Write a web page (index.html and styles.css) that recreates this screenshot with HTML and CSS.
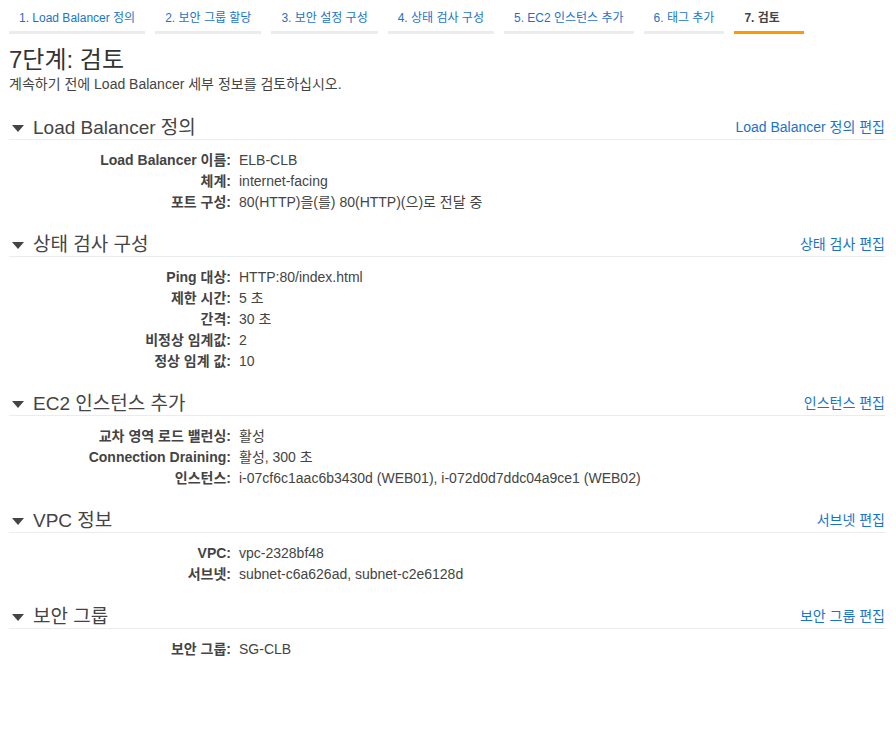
FILE: index.html
```html
<!DOCTYPE html>
<html lang="ko">
<head>
<meta charset="utf-8">
<title>7단계: 검토</title>
<link rel="stylesheet" href="styles.css">
</head>
<body>
<div class="page">
  <nav class="tabs">
    <a class="tab">1. Load Balancer 정의</a>
    <a class="tab">2. 보안 그룹 할당</a>
    <a class="tab">3. 보안 설정 구성</a>
    <a class="tab">4. 상태 검사 구성</a>
    <a class="tab">5. EC2 인스턴스 추가</a>
    <a class="tab">6. 태그 추가</a>
    <a class="tab active">7. 검토</a>
  </nav>

  <h1 class="title">7단계: 검토</h1>
  <p class="subtitle">계속하기 전에 Load Balancer 세부 정보를 검토하십시오.</p>

  <section class="section">
    <div class="section-head">
      <h2 class="section-title"><span class="caret"></span>Load Balancer 정의</h2>
      <a class="edit">Load Balancer 정의 편집</a>
    </div>
    <dl class="rows">
      <dt>Load Balancer 이름:</dt><dd>ELB-CLB</dd>
      <dt>체계:</dt><dd>internet-facing</dd>
      <dt>포트 구성:</dt><dd>80(HTTP)을(를) 80(HTTP)(으)로 전달 중</dd>
    </dl>
  </section>

  <section class="section">
    <div class="section-head">
      <h2 class="section-title"><span class="caret"></span>상태 검사 구성</h2>
      <a class="edit">상태 검사 편집</a>
    </div>
    <dl class="rows">
      <dt>Ping 대상:</dt><dd>HTTP:80/index.html</dd>
      <dt>제한 시간:</dt><dd>5 초</dd>
      <dt>간격:</dt><dd>30 초</dd>
      <dt>비정상 임계값:</dt><dd>2</dd>
      <dt>정상 임계 값:</dt><dd>10</dd>
    </dl>
  </section>

  <section class="section">
    <div class="section-head">
      <h2 class="section-title"><span class="caret"></span>EC2 인스턴스 추가</h2>
      <a class="edit">인스턴스 편집</a>
    </div>
    <dl class="rows">
      <dt>교차 영역 로드 밸런싱:</dt><dd>활성</dd>
      <dt>Connection Draining:</dt><dd>활성, 300 초</dd>
      <dt>인스턴스:</dt><dd>i-07cf6c1aac6b3430d (WEB01), i-072d0d7ddc04a9ce1 (WEB02)</dd>
    </dl>
  </section>

  <section class="section">
    <div class="section-head">
      <h2 class="section-title"><span class="caret"></span>VPC 정보</h2>
      <a class="edit">서브넷 편집</a>
    </div>
    <dl class="rows">
      <dt>VPC:</dt><dd>vpc-2328bf48</dd>
      <dt>서브넷:</dt><dd>subnet-c6a626ad, subnet-c2e6128d</dd>
    </dl>
  </section>

  <section class="section">
    <div class="section-head">
      <h2 class="section-title"><span class="caret"></span>보안 그룹</h2>
      <a class="edit">보안 그룹 편집</a>
    </div>
    <dl class="rows">
      <dt>보안 그룹:</dt><dd>SG-CLB</dd>
    </dl>
  </section>
</div>
</body>
</html>
```

FILE: styles.css
```css
html, body {
  margin: 0;
  padding: 0;
  background: #ffffff;
}

body {
  font-family: "Liberation Sans", "Noto Sans CJK KR", Arial, sans-serif;
  color: #444444;
  font-size: 14px;
}

.page {
  padding: 10px 11px 0 9px;
}

.tabs {
  display: flex;
  gap: 10px;
}

.tab {
  display: block;
  font-size: 12px;
  line-height: 14px;
  padding: 1px 10px 6px;
  color: #1a73c9;
  border-bottom: 3px solid #eaeded;
  cursor: pointer;
}

.tab.active {
  min-width: 50px;
  color: #444444;
  font-weight: bold;
  border-bottom-color: #ff9900;
}

.title {
  margin: 12px 0 0;
  font-size: 24px;
  line-height: 28px;
  font-weight: normal;
  color: #333333;
}

.subtitle {
  margin: 1px 0 24px;
  font-size: 14px;
  line-height: 18px;
}

.section {
  margin-bottom: 21px;
}

.section-head {
  display: flex;
  justify-content: space-between;
  align-items: baseline;
  height: 22px;
  border-bottom: 1px solid #eaeded;
}

.section-title {
  margin: 0;
  display: flex;
  align-items: center;
  font-size: 19px;
  line-height: 22px;
  font-weight: normal;
  color: #444444;
}

.caret {
  width: 0;
  height: 0;
  border-left: 6px solid transparent;
  border-right: 6px solid transparent;
  border-top: 7px solid #444444;
  margin: 0 9px 0 3px;
}

.edit {
  font-size: 14px;
  line-height: 18px;
  color: #1a73c9;
  cursor: pointer;
}

.rows {
  display: grid;
  grid-template-columns: 222px 1fr;
  column-gap: 8px;
  margin: 0;
  padding-top: 10px;
  line-height: 21px;
}

.rows dt {
  text-align: right;
  font-weight: bold;
}

.rows dd {
  margin: 0;
}
```
